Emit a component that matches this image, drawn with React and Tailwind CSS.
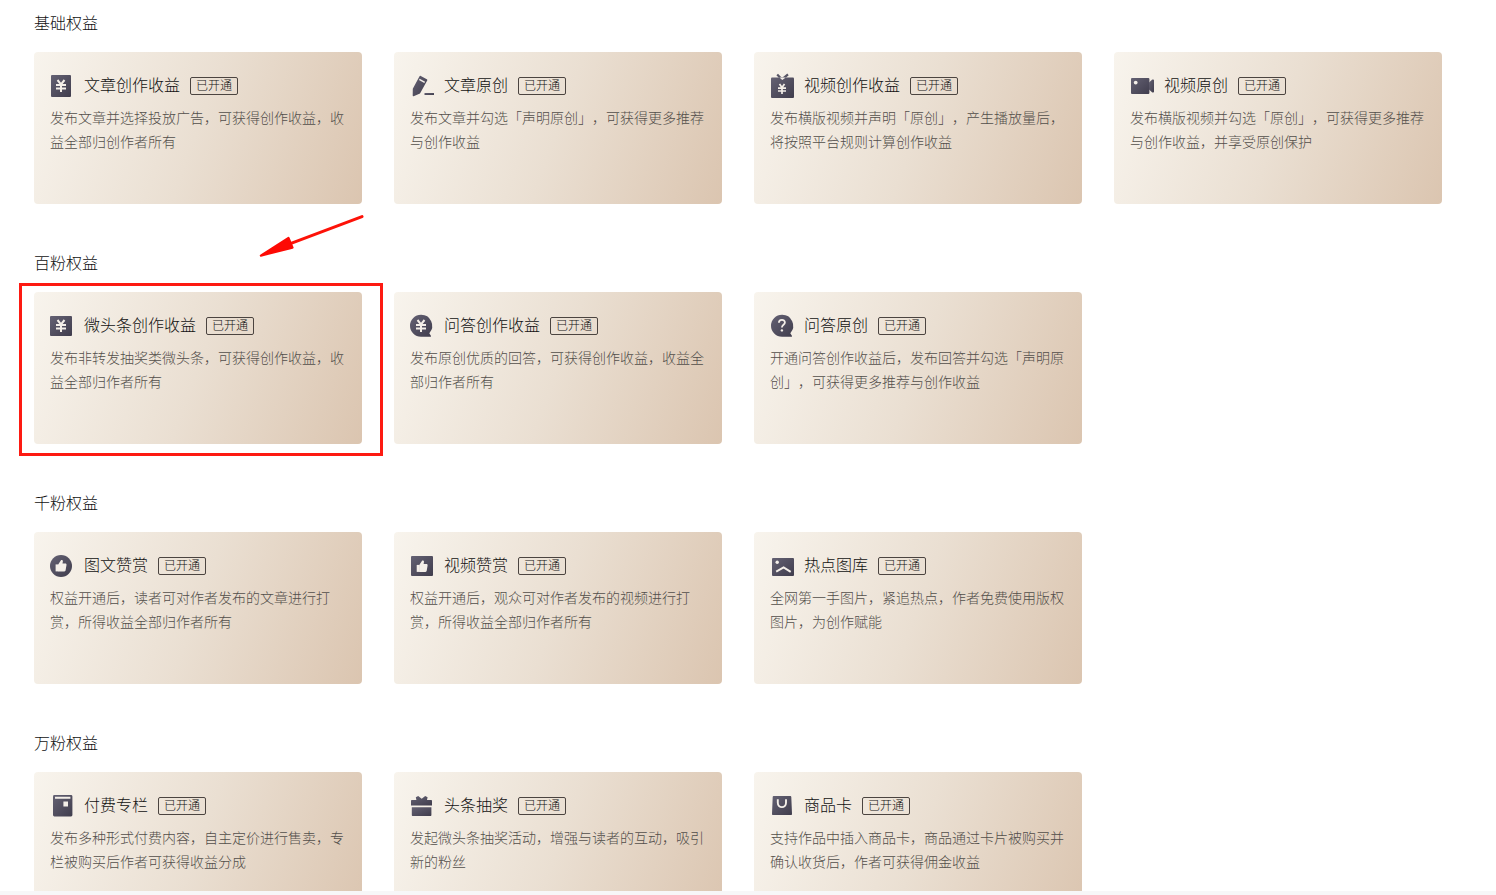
import React from "react";

const MARK = "#f4efe9";

function Yen({ x, y, w = 10, h = 12 }) {
  const cx = x + w / 2;
  return (
    <path
      d={`M${x + 1.5} ${y}L${cx} ${y + h * 0.36}L${x + w - 1.5} ${y}M${x} ${y + h * 0.42}H${x + w}M${x} ${y + h * 0.7}H${x + w}M${cx} ${y + h * 0.36}V${y + h}`}
      fill="none"
      stroke={MARK}
      strokeWidth={w < 10 ? 1.7 : 2}
    />
  );
}

function Thumb({ x, y }) {
  return (
    <g transform={`translate(${x} ${y})`} fill={MARK}>
      <path d="M0 4.4h2.6v7H0z" />
      <path d="M2.4 4.8 5.2.4C5.8-.4 7.4.1 7.3 1.3L6.9 3.6h2.9c.8 0 1.2.6 1.1 1.3L10 10.3c-.1.7-.6 1.1-1.2 1.1H2.4z" />
    </g>
  );
}

const icons = {
  article: (
    <>
      <rect x="1" y="1" width="20" height="22" rx="1" fill="url(#ink)" />
      <Yen x={6} y={6} />
    </>
  ),
  pencil: (
    <>
      <path d="M9.4 2.4c.3-.5.9-.7 1.4-.4l6 3.2c.5.3.7.9.4 1.4L10 19.4 3.6 22.2c-.5.2-.9-.1-.9-.6l.1-6.8z" fill="url(#ink)" />
      <path d="M9.3 5.4l5.4 3" stroke={MARK} strokeWidth="1.6" />
      <path d="M14.5 19H24v2h-9.5z" fill="url(#ink)" />
    </>
  ),
  tv: (
    <>
      <path d="M7.2.4l4.8 5 6-5" fill="none" stroke="#575565" strokeWidth="2.2" />
      <rect x="1" y="3.6" width="23" height="20.4" rx="1" fill="url(#ink)" />
      <path d="M9.4 3.6h6.4L12.3 6z" fill={MARK} />
      <Yen x={8} y={10} w={8} h={10} />
    </>
  ),
  camera: (
    <>
      <rect x="1" y="4" width="18.4" height="16" rx="1" fill="url(#ink)" />
      <path d="M19 8.6l3-2.9c.6-.5 2-.4 2 .5v11.6c0 .9-1.4 1-2 .5l-3-2.9z" fill="url(#ink)" />
      <circle cx="5.7" cy="8.6" r="1.9" fill={MARK} />
    </>
  ),
  micro: (
    <>
      <rect x="0" y="2" width="22" height="20" rx="1" fill="url(#ink)" />
      <Yen x={6} y={6} />
    </>
  ),
  answer: (
    <>
      <path d="M11 .8a11 11 0 0 1 8.3 18.4l1.6 2.5c.3.5 0 1.1-.6 1.1H11A11 11 0 0 1 11 .8z" fill="url(#ink)" />
      <Yen x={6} y={6} />
    </>
  ),
  question: (
    <>
      <path d="M12 .8a11 11 0 0 1 8.3 18.4l1.6 2.5c.3.5 0 1.1-.6 1.1H12A11 11 0 0 1 12 .8z" fill="url(#ink)" />
      <path d="M8.9 8.8c0-4 6-3.9 6-.4 0 2.4-3 2.4-3 5.2" fill="none" stroke={MARK} strokeWidth="1.8" />
      <circle cx="11.9" cy="16.4" r="1.2" fill={MARK} />
    </>
  ),
  thumbRound: (
    <>
      <circle cx="11" cy="12" r="11" fill="url(#ink)" />
      <Thumb x={5.6} y={6} />
    </>
  ),
  thumbSquare: (
    <>
      <rect x="1" y="2" width="22" height="20" rx="1" fill="url(#ink)" />
      <Thumb x={6.7} y={6.5} />
    </>
  ),
  picture: (
    <>
      <rect x="2" y="4" width="22" height="18" rx="1" fill="url(#ink)" />
      <circle cx="7.2" cy="8.2" r="1.7" fill={MARK} />
      <path d="M6.2 17.6l7.4-4.2 7.1 4.4" fill="none" stroke={MARK} strokeWidth="2" />
    </>
  ),
  book: (
    <>
      <rect x="3" y="1" width="19.4" height="21.4" rx="1.4" fill="url(#ink)" />
      <path d="M5 2.8h15.4v1.9H5zM13.4 7.4H18v5h-4.6z" fill={MARK} />
    </>
  ),
  gift: (
    <>
      <path d="M1 7c0-.6.4-1 1-1h4.4L5.8 3.2 8.2 2l3.5 2.7L15.2 2l2.4 1.2L17 6h4c.6 0 1 .4 1 1v4.4H1z" fill="url(#ink)" />
      <path d="M1.8 13.3h19.6v7.7c0 .6-.4 1-1 1H2.8c-.6 0-1-.4-1-1z" fill="url(#ink)" />
    </>
  ),
  bag: (
    <>
      <path d="M3.6 2h16.8c.5 0 .9.4.9.9L22 20c0 .6-.4 1-1 1H3c-.6 0-1-.4-1-1l.7-17.1c0-.5.4-.9.9-.9z" fill="url(#ink)" />
      <path d="M7.8 5.2v3.6c0 5.8 8.2 5.8 8.2 0V5.2" fill="none" stroke={MARK} strokeWidth="1.9" />
    </>
  ),
};

const sections = [
  {
    title: "基础权益",
    cards: [
      { icon: "article", name: "文章创作收益", desc: "发布文章并选择投放广告，可获得创作收益，收益全部归创作者所有" },
      { icon: "pencil", name: "文章原创", desc: "发布文章并勾选「声明原创」，可获得更多推荐与创作收益" },
      { icon: "tv", name: "视频创作收益", desc: "发布横版视频并声明「原创」，产生播放量后，将按照平台规则计算创作收益" },
      { icon: "camera", name: "视频原创", desc: "发布横版视频并勾选「原创」，可获得更多推荐与创作收益，并享受原创保护" },
    ],
  },
  {
    title: "百粉权益",
    cards: [
      { icon: "micro", name: "微头条创作收益", desc: "发布非转发抽奖类微头条，可获得创作收益，收益全部归作者所有", marked: true },
      { icon: "answer", name: "问答创作收益", desc: "发布原创优质的回答，可获得创作收益，收益全部归作者所有" },
      { icon: "question", name: "问答原创", desc: "开通问答创作收益后，发布回答并勾选「声明原创」，可获得更多推荐与创作收益" },
    ],
  },
  {
    title: "千粉权益",
    cards: [
      { icon: "thumbRound", name: "图文赞赏", desc: "权益开通后，读者可对作者发布的文章进行打赏，所得收益全部归作者所有" },
      { icon: "thumbSquare", name: "视频赞赏", desc: "权益开通后，观众可对作者发布的视频进行打赏，所得收益全部归作者所有" },
      { icon: "picture", name: "热点图库", desc: "全网第一手图片，紧追热点，作者免费使用版权图片，为创作赋能" },
    ],
  },
  {
    title: "万粉权益",
    cards: [
      { icon: "book", name: "付费专栏", desc: "发布多种形式付费内容，自主定价进行售卖，专栏被购买后作者可获得收益分成" },
      { icon: "gift", name: "头条抽奖", desc: "发起微头条抽奖活动，增强与读者的互动，吸引新的粉丝" },
      { icon: "bag", name: "商品卡", desc: "支持作品中插入商品卡，商品通过卡片被购买并确认收货后，作者可获得佣金收益" },
    ],
  },
];

function Icon({ name }) {
  return (
    <svg viewBox="0 0 24 24" className="size-6 shrink-0 overflow-visible" aria-hidden="true">
      <defs>
        <linearGradient id="ink" x1="0" y1="0" x2="1" y2="1">
          <stop offset="0" stopColor="#646173" />
          <stop offset="1" stopColor="#403d4d" />
        </linearGradient>
      </defs>
      {icons[name]}
    </svg>
  );
}

// red box and arrow drawn over the card
function Marker() {
  return (
    <>
      <div className="pointer-events-none absolute -top-[9px] -right-[21px] -bottom-3 -left-[15px] border-3 border-[#fd1a12]" />
      <svg
        viewBox="0 0 105 43"
        className="pointer-events-none absolute -top-[77px] left-[225px] h-[43px] w-[105px]"
        aria-hidden="true"
      >
        <path d="M103 1.6L32 28.4" stroke="#fd1208" strokeWidth="3" strokeLinecap="round" />
        <path d="M1.8 40.6L29.5 23l4 9.6z" fill="#fd0a04" stroke="#fd0a04" strokeWidth="2.2" strokeLinejoin="round" />
      </svg>
    </>
  );
}

function Card({ icon, name, desc, marked }) {
  return (
    <article className="relative h-[152px] rounded-[4px] bg-[linear-gradient(110deg,#f8f4ed_0%,#eadfd2_50%,#dbc5b0_100%)] px-4 pt-[22px]">
      <div className="flex items-center gap-2.5">
        <Icon name={icon} />
        <h3 className="pb-1 text-base leading-5 text-[#111111]">{name}</h3>
        <span className="flex h-[18px] items-center rounded-[2px] border border-[#4b4440] px-[5px] pb-0.5 text-xs leading-[14px] text-[#111111]">
          已开通
        </span>
      </div>
      <p className="mt-[7px] text-sm leading-6 text-[#524e4a]">{desc}</p>
      {marked && <Marker />}
    </article>
  );
}

function App() {
  return (
    <div
      lang="zh-CN"
      className="flex h-screen flex-col bg-white font-['Noto_Sans_CJK_SC',sans-serif] font-light [text-spacing-trim:space-all]"
    >
      <main className="flex min-h-0 flex-1 flex-col gap-12 overflow-hidden pt-3 pr-[54px] pl-[34px]">
        {sections.map((section) => (
          <section key={section.title} className="shrink-0">
            <h2 className="mb-4 pb-1 text-base leading-5 text-[#111111]">{section.title}</h2>
            <div className="grid grid-cols-4 gap-8">
              {section.cards.map((card) => (
                <Card key={card.name} {...card} />
              ))}
            </div>
          </section>
        ))}
      </main>
      <div className="h-1 shrink-0 bg-[#f7f7f8]" />
    </div>
  );
}

export default App;
